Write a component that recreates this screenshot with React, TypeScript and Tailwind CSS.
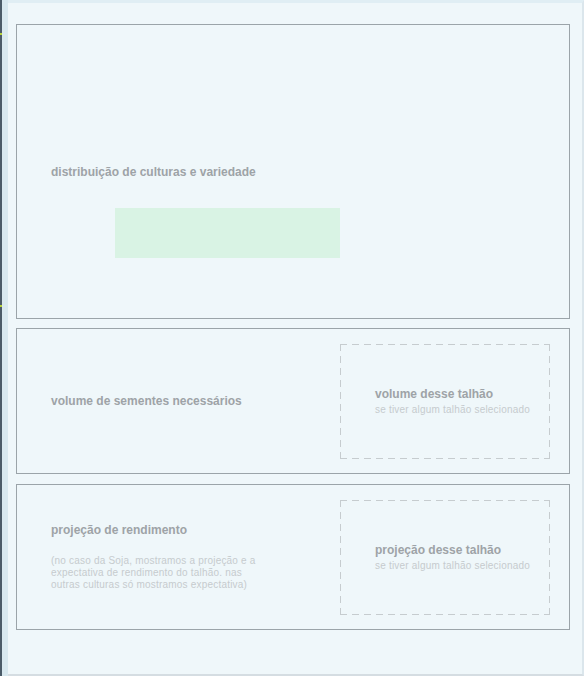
import React from "react";

function SelectedBox({ title }: { title: string }) {
  return (
    <div className="w-[210px] h-[115px] flex flex-col justify-center pl-[35px] [background:repeating-linear-gradient(90deg,#c6cccf_0_7px,transparent_7px_12px)_top/100%_1px_no-repeat,repeating-linear-gradient(90deg,#c6cccf_0_7px,transparent_7px_12px)_bottom/100%_1px_no-repeat,repeating-linear-gradient(180deg,#c6cccf_0_7px,transparent_7px_12px)_left/1px_100%_no-repeat,repeating-linear-gradient(180deg,#c6cccf_0_7px,transparent_7px_12px)_right/1px_100%_no-repeat]">
      <p className="text-[12px] font-bold leading-[14px] text-[#9ea3a7]">{title}</p>
      <p className="text-[10px] tracking-[0.2px] leading-[13px] mt-[2px] text-[#c6cbce]">se tiver algum talhão selecionado</p>
    </div>
  );
}

export default function App() {
  return (
    <div className="w-[584px] h-[676px] flex bg-[#eff7fa] font-['Liberation_Sans',Arial,sans-serif] overflow-hidden">
      {/* window edge */}
      <div className="relative w-[2px] h-full bg-[#4b5b68]">
        <div className="absolute left-0 top-[33px] w-[2px] h-[2px] bg-[#b7d43a]" />
        <div className="absolute left-0 top-[305px] w-[2px] h-[2px] bg-[#b7d43a]" />
      </div>
      <div className="w-[6px] h-full bg-[#d8e8ef]" />

      <div className="flex-1 h-full border-t-[3px] border-t-[#e0eef4] border-r-2 border-r-[#dbe6ec] border-b-2 border-b-[#d5dde2] pl-2 pr-[12px] pt-[21px] flex flex-col">
        {/* distribuição */}
        <section className="h-[295px] border border-[#9ba4a9] pl-[34px] pt-[140px]">
          <h2 className="text-[12px] font-bold leading-[14px] text-[#9ea3a7]">distribuição de culturas e variedade</h2>
          <div className="ml-[64px] mt-[29px] w-[225px] h-[50px] bg-[#d9f3e4]" />
        </section>

        {/* volume */}
        <section className="mt-[9px] h-[146px] border border-[#9ba4a9] pl-[34px] pr-[19px] flex items-center justify-between">
          <h2 className="text-[12px] font-bold leading-[14px] text-[#9ea3a7]">volume de sementes necessários</h2>
          <SelectedBox title="volume desse talhão" />
        </section>

        {/* projeção */}
        <section className="mt-[10px] h-[146px] border border-[#9ba4a9] pl-[34px] pr-[19px] flex items-center justify-between">
          <div className="w-[212px]">
            <h2 className="text-[12px] font-bold leading-[14px] text-[#9ea3a7]">projeção de rendimento</h2>
            <p className="mt-[18px] text-[10px] tracking-[0.2px] leading-[12px] text-[#c6cbce]">
              (no caso da Soja, mostramos a projeção e a expectativa de rendimento do talhão. nas outras culturas só mostramos expectativa)
            </p>
          </div>
          <SelectedBox title="projeção desse talhão" />
        </section>
      </div>
    </div>
  );
}
